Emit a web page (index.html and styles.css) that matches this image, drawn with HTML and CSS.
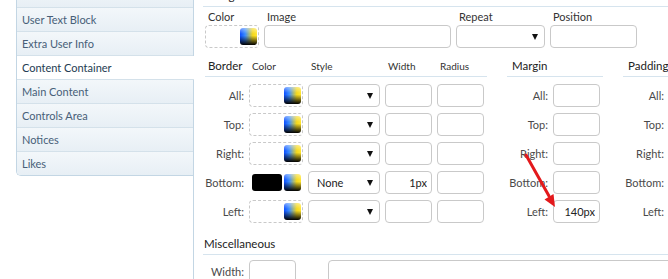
FILE: index.html
```html
<!DOCTYPE html>
<html lang="en">
<head>
  <meta charset="UTF-8">
  <title>Style Properties</title>
  <link rel="stylesheet" href="styles.css">
</head>
<body>
  <div class="page">
    <ul class="tabs">
      <li>Avatar Holder</li>
      <li>User Text Block</li>
      <li>Extra User Info</li>
      <li class="active">Content Container</li>
      <li>Main Content</li>
      <li>Controls Area</li>
      <li>Notices</li>
      <li>Likes</li>
    </ul>

    <div class="panel">
      <h3 class="group-title">Background</h3>
      <div class="bg-grid">
        <label>Color</label>
        <label>Image</label>
        <label>Repeat</label>
        <label>Position</label>
        <div class="color-box"><span class="swatch"></span><span class="picker"></span></div>
        <input type="text" class="field">
        <div class="select"><span class="value"></span><span class="arrow"></span></div>
        <input type="text" class="field">
      </div>

      <div class="box-row">
        <div class="border-block">
          <div class="border-grid head">
            <div class="title">Border</div>
            <div>Color</div>
            <div>Style</div>
            <div>Width</div>
            <div>Radius</div>
          </div>
          <div class="border-grid rows">
            <label>All:</label>
            <div class="color-box"><span class="swatch"></span><span class="picker"></span></div>
            <div class="select"><span class="value"></span><span class="arrow"></span></div>
            <input type="text" class="field">
            <input type="text" class="field">

            <label>Top:</label>
            <div class="color-box"><span class="swatch"></span><span class="picker"></span></div>
            <div class="select"><span class="value"></span><span class="arrow"></span></div>
            <input type="text" class="field">
            <input type="text" class="field">

            <label>Right:</label>
            <div class="color-box"><span class="swatch"></span><span class="picker"></span></div>
            <div class="select"><span class="value"></span><span class="arrow"></span></div>
            <input type="text" class="field">
            <input type="text" class="field">

            <label>Bottom:</label>
            <div class="color-box filled"><span class="swatch"></span><span class="picker"></span></div>
            <div class="select"><span class="value">None</span><span class="arrow"></span></div>
            <input type="text" class="field" value="1px">
            <input type="text" class="field">

            <label>Left:</label>
            <div class="color-box"><span class="swatch"></span><span class="picker"></span></div>
            <div class="select"><span class="value"></span><span class="arrow"></span></div>
            <input type="text" class="field">
            <input type="text" class="field">
          </div>
        </div>

        <div class="side-block">
          <div class="head"><div class="title">Margin</div></div>
          <div class="side-grid rows">
            <label>All:</label><input type="text" class="field">
            <label>Top:</label><input type="text" class="field">
            <label>Right:</label><input type="text" class="field">
            <label>Bottom:</label><input type="text" class="field">
            <label>Left:</label><input type="text" class="field" value="140px">
          </div>
        </div>

        <div class="side-block">
          <div class="head"><div class="title">Padding</div></div>
          <div class="side-grid rows">
            <label>All:</label><input type="text" class="field">
            <label>Top:</label><input type="text" class="field">
            <label>Right:</label><input type="text" class="field">
            <label>Bottom:</label><input type="text" class="field">
            <label>Left:</label><input type="text" class="field">
          </div>
        </div>
      </div>

      <h3 class="group-title misc">Miscellaneous</h3>
      <div class="misc-row">
        <label>Width:</label>
        <input type="text" class="field">
        <textarea class="extra"></textarea>
      </div>
    </div>
  </div>

  <!-- annotation arrow -->
  <svg class="pointer" width="60" height="70" viewBox="510 145 60 70">
    <line x1="526" y1="155" x2="549" y2="196" stroke="#e3191c" stroke-width="3" stroke-linecap="round"/>
    <polygon points="555,207 544.5,199.5 553.5,194" fill="#e3191c"/>
  </svg>
</body>
</html>
```

FILE: styles.css
```css
:root {
  --text: #333;
  --label: #4a4a4a;
  --tab-text: #476078;
  --tab-active: #243c52;
  --line: #d6e4ee;
  --frame: #c3d6e4;
  --input-border: #c9c9c9;
}

body {
  margin: 0;
  background: #fff;
  font-family: Lato, "Liberation Sans", sans-serif;
  font-size: 11px;
  color: var(--text);
  overflow: hidden;
}

.page {
  display: flex;
  align-items: flex-start;
  margin-top: -16px;
}

/* left tab list */
.tabs {
  list-style: none;
  margin: 0 0 0 16px;
  padding: 0;
  width: 177px;
  flex-shrink: 0;
  box-sizing: border-box;
  border-left: 1px solid var(--frame);
  border-bottom: 1px solid var(--frame);
  border-bottom-left-radius: 5px;
  font-size: 11px;
}

.tabs li {
  height: 23px;
  line-height: 23px;
  padding-left: 5px;
  color: var(--tab-text);
  background: linear-gradient(#f3f7fa, #e7eff5);
  border-bottom: 1px solid #d4e1ea;
}

.tabs li:last-child {
  border-bottom: none;
  border-bottom-left-radius: 4px;
}

.tabs li.active {
  position: relative;
  z-index: 1;
  margin-right: -1px;
  background: #fff;
  color: var(--tab-active);
}

/* right panel */
.panel {
  flex: 1;
  min-width: 0;
  min-height: 320px;
  border-left: 1px solid var(--frame);
  padding: 4px 0 0 9px;
}

.group-title {
  margin: 0;
  padding: 0 1px 2px;
  font-size: 11.5px;
  font-weight: normal;
  line-height: 16px;
  color: #222;
  border-bottom: 1px solid var(--line);
}

.group-title.misc {
  margin-top: 13px;
}

label {
  color: var(--label);
}

.bg-grid {
  display: grid;
  grid-template-columns: 54px 187px 89px 87px;
  column-gap: 5px;
  row-gap: 1px;
  margin-top: 3px;
  padding-left: 2px;
}

.bg-grid label {
  padding-left: 3px;
  line-height: 14px;
  color: #333;
}

/* controls */
.field, .select, .color-box, .extra {
  box-sizing: border-box;
  height: 23px;
  border: 1px solid var(--input-border);
  border-radius: 4px;
  background: #fff;
}

.field {
  width: 100%;
  margin: 0;
  padding: 0 4px;
  font: 11px Lato, "Liberation Sans", sans-serif;
  color: #222;
  text-align: right;
}

.select {
  display: flex;
  align-items: center;
  justify-content: space-between;
  padding: 0 6px 0 8px;
  font-size: 11px;
  color: #222;
}

.select .arrow {
  width: 0;
  height: 0;
  border-left: 3px solid transparent;
  border-right: 3px solid transparent;
  border-top: 6px solid #111;
}

.color-box {
  display: flex;
  gap: 2px;
  padding: 2px 1px 2px 2px;
  border-style: dashed;
}

.color-box .swatch {
  flex: 1;
  border-radius: 3px;
}

.color-box.filled {
  border-color: transparent;
}

.color-box.filled .swatch {
  background: #000;
}

.color-box .picker {
  width: 17px;
  height: 17px;
  border-radius: 3px;
  background:
    linear-gradient(to bottom, rgba(255, 255, 255, 0.45), rgba(255, 255, 255, 0) 35%, rgba(0, 0, 0, 0) 45%, #000 100%),
    linear-gradient(to right, #0a4dff, #3b8cff 30%, #f4d81c 75%, #ffe431);
}

/* border / margin / padding */
.box-row {
  display: flex;
  gap: 20px;
  margin-top: 10px;
  padding-left: 2px;
}

.border-block {
  width: 282px;
  flex-shrink: 0;
}

.side-block {
  width: 96px;
  flex-shrink: 0;
}

.head {
  padding-bottom: 2px;
  border-bottom: 1px solid var(--line);
  line-height: 16px;
  font-size: 10px;
  color: #333;
}

.head .title {
  font-size: 11.5px;
  color: #222;
  padding-left: 5px;
}

.border-grid {
  display: grid;
  grid-template-columns: 39px 54px 72px 47px 47px;
  column-gap: 5px;
}

.border-grid.head {
  align-items: baseline;
}

.border-grid.head > div {
  padding-left: 3px;
}

.side-grid {
  display: grid;
  grid-template-columns: 41px 47px;
  column-gap: 5px;
}

.rows {
  row-gap: 6px;
  margin-top: 7px;
}

.rows label, .misc-row label {
  text-align: right;
  line-height: 23px;
}

.misc-row {
  display: flex;
  margin-top: 5px;
  padding-left: 2px;
}

.misc-row > * {
  flex-shrink: 0;
}

.misc-row label {
  width: 39px;
  margin-right: 5px;
}

.misc-row .field {
  width: 47px;
}

.extra {
  width: 400px;
  height: 60px;
  margin: 0 0 0 32px;
  resize: none;
}

/* red annotation arrow */
.pointer {
  position: absolute;
  left: 510px;
  top: 145px;
}
```
